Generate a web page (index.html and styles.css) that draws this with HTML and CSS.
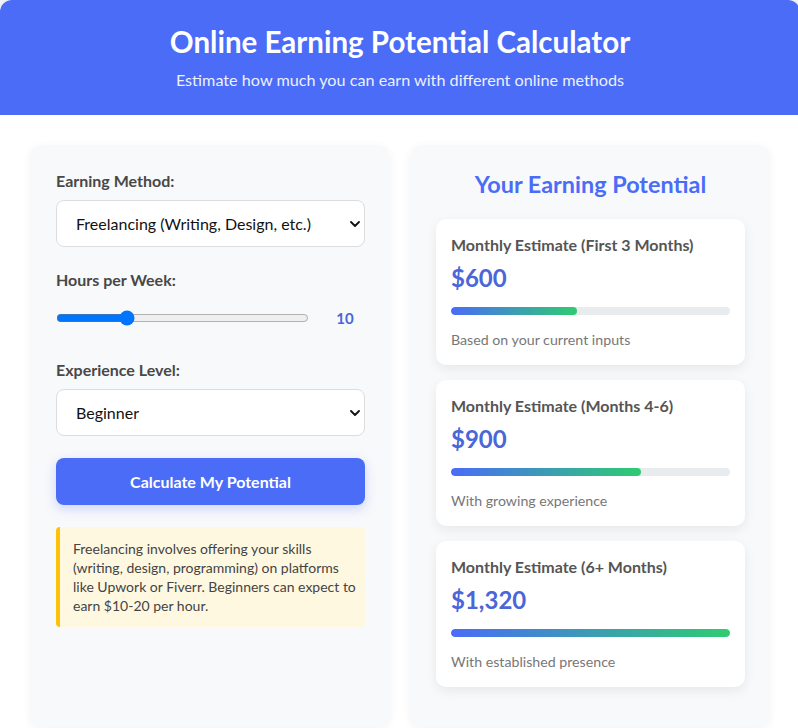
FILE: index.html
```html
<!DOCTYPE html>
<html lang="en">
<head>
<meta charset="utf-8">
<title>Online Earning Potential Calculator</title>
<link rel="stylesheet" href="styles.css">
</head>
<body>
<div class="app">
  <header class="hero">
    <h1>Online Earning Potential Calculator</h1>
    <p>Estimate how much you can earn with different online methods</p>
  </header>
  <main class="content">
    <section class="panel form-panel">
      <div class="field">
        <label class="label" for="method">Earning Method:</label>
        <div class="select-wrap">
          <select id="method" class="select">
            <option>Freelancing (Writing, Design, etc.)</option>
          </select>
          <svg class="chevron" viewBox="0 0 10 6" width="10" height="6"><path d="M1 1l4 4 4-4" fill="none" stroke="#111" stroke-width="1.8" stroke-linecap="round" stroke-linejoin="round"/></svg>
        </div>
      </div>
      <div class="field">
        <label class="label" for="hours">Hours per Week:</label>
        <div class="range-row">
          <input id="hours" class="range" type="range" min="1" max="35" value="10">
          <span class="range-value">10</span>
        </div>
      </div>
      <div class="field">
        <label class="label" for="level">Experience Level:</label>
        <div class="select-wrap">
          <select id="level" class="select">
            <option>Beginner</option>
          </select>
          <svg class="chevron" viewBox="0 0 10 6" width="10" height="6"><path d="M1 1l4 4 4-4" fill="none" stroke="#111" stroke-width="1.8" stroke-linecap="round" stroke-linejoin="round"/></svg>
        </div>
      </div>
      <button class="btn" type="button">Calculate My Potential</button>
      <div class="info">Freelancing involves offering your skills (writing, design, programming) on platforms like Upwork or Fiverr. Beginners can expect to earn $10-20 per hour.</div>
    </section>
    <section class="panel results-panel">
      <h2 class="results-title">Your Earning Potential</h2>
      <div class="card">
        <div class="card-title">Monthly Estimate (First 3 Months)</div>
        <div class="amount">$600</div>
        <div class="bar"><div class="bar-fill" style="width:45%"></div></div>
        <div class="note">Based on your current inputs</div>
      </div>
      <div class="card">
        <div class="card-title">Monthly Estimate (Months 4-6)</div>
        <div class="amount">$900</div>
        <div class="bar"><div class="bar-fill" style="width:68%"></div></div>
        <div class="note">With growing experience</div>
      </div>
      <div class="card">
        <div class="card-title">Monthly Estimate (6+ Months)</div>
        <div class="amount">$1,320</div>
        <div class="bar"><div class="bar-fill" style="width:100%"></div></div>
        <div class="note">With established presence</div>
      </div>
    </section>
  </main>
</div>
</body>
</html>
```

FILE: styles.css
```css
* { box-sizing: border-box; }

body {
  margin: 0;
  background: #f5f7fa;
  font-family: "Lato", "Open Sans", "Liberation Sans", sans-serif;
  color: #333;
}

.app {
  width: 800px;
  background: #fff;
  border-radius: 12px;
  overflow: hidden;
  box-shadow: 0 0 12px rgba(0, 0, 0, 0.08);
}

.hero {
  background: #4a6cf7;
  color: #fff;
  text-align: center;
  padding: 25px 20px 24px;
}

.hero h1 {
  margin: 0;
  font-size: 29.5px;
  line-height: 34px;
  font-weight: 700;
}

.hero p {
  margin: 10px 0 0;
  font-size: 16.2px;
  line-height: 22px;
  opacity: 0.9;
}

.content {
  display: grid;
  grid-template-columns: 1fr 1fr;
  gap: 20px;
  padding: 30px;
}

.panel {
  background: #f8f9fb;
  border-radius: 12px;
  padding: 25px 25px 25px 26px;
  box-shadow: 0 2px 10px rgba(0, 0, 0, 0.05);
}

.field { margin-bottom: 22px; }

.label {
  display: block;
  font-size: 16px;
  line-height: 22px;
  font-weight: 700;
  color: #484848;
  margin-bottom: 8px;
}

.select-wrap { position: relative; }

.select {
  display: block;
  width: 100%;
  height: 47px;
  appearance: none;
  -webkit-appearance: none;
  background: #fff;
  border: 1px solid #ddd;
  border-radius: 8px;
  padding: 0 30px 0 19px;
  font-family: inherit;
  font-size: 16px;
  color: #111;
}

.chevron {
  position: absolute;
  right: 5px;
  top: 21px;
}

.range-row {
  display: flex;
  align-items: center;
  height: 38px;
}

.range {
  flex: 1;
  margin: 0;
  accent-color: #0075ff;
}

.range-value {
  width: 40px;
  margin-left: 16px;
  text-align: center;
  font-size: 15px;
  font-weight: 700;
  color: #4a66d8;
}

.btn {
  display: block;
  width: 100%;
  height: 47px;
  border: 0;
  border-radius: 8px;
  background: #4a6cf7;
  color: #fff;
  font-family: inherit;
  font-size: 16px;
  font-weight: 700;
  box-shadow: 0 4px 12px rgba(74, 108, 247, 0.25);
  margin-bottom: 22px;
}

.info {
  background: #fff8e1;
  border-left: 4px solid #ffc107;
  border-radius: 4px;
  padding: 12px 9px 12px 13px;
  font-size: 14px;
  line-height: 19px;
  color: #444;
}

.results-title {
  margin: 0 0 20px;
  text-align: center;
  font-size: 23.4px;
  line-height: 29px;
  font-weight: 700;
  color: #4a6cf7;
}

.card {
  background: #fff;
  border-radius: 10px;
  padding: 15px;
  margin-bottom: 15px;
  box-shadow: 0 4px 12px rgba(0, 0, 0, 0.07);
}

.card-title {
  font-size: 16px;
  line-height: 22px;
  font-weight: 700;
  color: #555;
}

.amount {
  margin-top: 6px;
  font-size: 24px;
  line-height: 31px;
  font-weight: 700;
  color: #4a66d8;
}

.bar {
  margin-top: 14px;
  height: 8px;
  border-radius: 4px;
  background: #e9ecef;
  overflow: hidden;
}

.bar-fill {
  height: 100%;
  border-radius: 4px;
  background: linear-gradient(90deg, #4a6cf7, #2ecc71);
}

.note {
  margin-top: 15px;
  font-size: 14.2px;
  line-height: 20px;
  color: #777;
}
```
